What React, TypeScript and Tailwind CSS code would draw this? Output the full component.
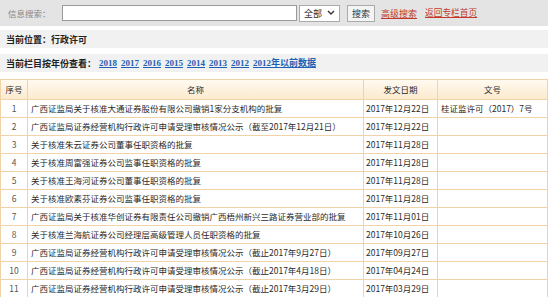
const rows = [
  ["1", "广西证监局关于核准大通证券股份有限公司撤销1家分支机构的批复", "2017年12月22日", "桂证监许可（2017）7号"],
  ["2", "广西证监局证券经营机构行政许可申请受理审核情况公示（截至2017年12月21日）", "2017年12月22日", ""],
  ["3", "关于核准朱云证券公司董事任职资格的批复", "2017年11月28日", ""],
  ["4", "关于核准周富强证券公司监事任职资格的批复", "2017年11月28日", ""],
  ["5", "关于核准王海河证券公司董事任职资格的批复", "2017年11月28日", ""],
  ["6", "关于核准欧素芬证券公司监事任职资格的批复", "2017年11月28日", ""],
  ["7", "广西证监局关于核准华创证券有限责任公司撤销广西梧州新兴三路证券营业部的批复", "2017年11月01日", ""],
  ["8", "关于核准兰海航证券公司经理层高级管理人员任职资格的批复", "2017年10月26日", ""],
  ["9", "广西证监局证券经营机构行政许可申请受理审核情况公示（截止2017年9月27日）", "2017年09月27日", ""],
  ["10", "广西证监局证券经营机构行政许可申请受理审核情况公示（截止2017年4月18日）", "2017年04月24日", ""],
  ["11", "广西证监局证券经营机构行政许可申请受理审核情况公示（截止2017年3月29日）", "2017年03月29日", ""],
];

const years = ["2018", "2017", "2016", "2015", "2014", "2013", "2012", "2012年以前数据"];

export default function App() {
  return (
    <div className="h-[297px] w-[552px] overflow-hidden whitespace-nowrap bg-white text-[8.5px] leading-none text-[#2a2a2a] [font-family:'Noto_Sans_CJK_SC','Liberation_Sans',sans-serif]">
      <div className="flex h-[26px] w-[548px] items-center bg-[#e4e4e4] pl-2">
        <span className="w-[54px] text-[#888]">信息搜索：</span>
        <input className="h-[16px] w-[235px] border border-[#999] bg-white" />
        <div className="ml-[2px] flex h-[17px] w-[41px] items-center justify-between border border-[#aaa] bg-white px-1">
          <span className="text-[9px]">全部</span>
          <svg width="8" height="6" viewBox="0 0 8 6">
            <path d="M1 1l3 3 3-3" fill="none" stroke="#333" strokeWidth="1.4" />
          </svg>
        </div>
        <button className="ml-[7px] h-[17px] w-[28px] border border-[#aaa] bg-[#f4f4f4] text-[9px] text-[#333]">搜索</button>
        <a className="ml-[6px] text-[9px] text-[#c0392b] underline">高级搜索</a>
        <a className="ml-[8px] text-[8.7px] text-[#c0392b] underline">返回专栏首页</a>
      </div>

      <div className="mt-[4px] flex h-[18px] w-[548px] items-center bg-[#f1f1f1] pl-[6px] text-[9px] font-bold text-[#222]">
        当前位置：行政许可
      </div>

      <div className="mt-[6px] flex h-[18px] w-[548px] items-center bg-[#f1f1f1] pl-[6px] text-[9px] font-bold text-[#222]">
        <span className="w-[93px]">当前栏目按年份查看：</span>
        <div className="flex gap-[4px]">
          {years.map((y) => (
            <a key={y} className="text-[#1f5fb3] underline [font-family:'Liberation_Serif','Noto_Sans_CJK_SC',serif]">
              {y}
            </a>
          ))}
        </div>
      </div>

      <table className="mt-[7px] w-[548px] table-fixed border-collapse">
        <colgroup>
          <col className="w-[27px]" />
          <col className="w-[336px]" />
          <col className="w-[74px]" />
          <col />
        </colgroup>
        <thead>
          <tr className="h-[20px] bg-gradient-to-b from-[#fffaf0] to-[#fbe9cc]">
            <th className="border border-[#f0d3a8] font-normal">序号</th>
            <th className="border border-[#f0d3a8] font-normal">名称</th>
            <th className="border border-[#f0d3a8] font-normal">发文日期</th>
            <th className="border border-[#f0d3a8] font-normal">文号</th>
          </tr>
        </thead>
        <tbody>
          {rows.map((r) => (
            <tr key={r[0]} className="h-[18px]">
              <td className="border border-[#f0d3a8] text-center text-[#555]">{r[0]}</td>
              <td className="overflow-hidden border border-[#f0d3a8] pl-[3px]">{r[1]}</td>
              <td className="border border-[#f0d3a8] pl-[2px]">{r[2]}</td>
              <td className="border border-[#f0d3a8] pl-[3px]">{r[3]}</td>
            </tr>
          ))}
        </tbody>
      </table>
    </div>
  );
}
